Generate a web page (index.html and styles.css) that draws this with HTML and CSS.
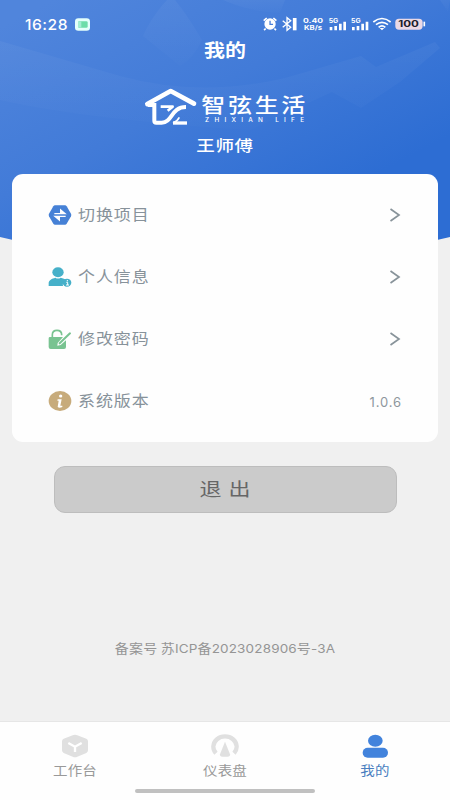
FILE: index.html
```html
<!DOCTYPE html>
<html lang="zh-CN">
<head>
<meta charset="utf-8">
<title>我的</title>
<link rel="stylesheet" href="styles.css">
</head>
<body>
<div class="screen">
  <svg class="backdrop" viewBox="0 0 450 260" aria-hidden="true">
    <defs>
      <linearGradient id="sky" gradientUnits="userSpaceOnUse" x1="90" y1="-20" x2="230" y2="250">
        <stop offset="0" stop-color="#5085dc"/><stop offset=".5" stop-color="#427bd8"/><stop offset="1" stop-color="#2d6dd3"/>
      </linearGradient>
      <linearGradient id="fade" x1="0" y1="0" x2="0" y2="1">
        <stop offset="0" stop-color="#fff" stop-opacity=".04"/><stop offset="1" stop-color="#fff" stop-opacity="0.01"/>
      </linearGradient>
    </defs>
    <path d="M0 0H450V237Q225 292 0 237Z" fill="url(#sky)"/>
    <path d="M167 0C155 13 148 25 143 36L180 66Q194 58 202 40Q188 16 175 0Z" fill="url(#fade)"/>
    <path d="M0 41L120 76Q200 98 285 78L361 56L376 67L435 42L440 48L400 82L361 108L332 92L250 130Q90 120 0 100Z" fill="url(#fade)"/>
    <path d="M450 0H440L448 12ZM223 0H285L280 13Q250 12 223 0Z" fill="url(#fade)"/>
  </svg>

  <header class="status">
    <span class="clock">16:28</span>
    <svg class="chip" viewBox="0 0 45 38"><rect width="45" height="38" rx="10" fill="#e4fffb"/><rect x="9" y="9" width="29" height="20" rx="4" fill="#6cdda9"/><path d="M9 10h10v18h-6q-4 0-4-4z" fill="#a3eed3"/></svg>
    <svg class="indicators" viewBox="110 50 495 50" fill="none" stroke="#fff">
      <circle cx="134" cy="74" r="17" fill="#fff" stroke="none"/>
      <path d="M115 64l9-8M153 64l-9-8M121 88l-5 4M147 88l5 4" stroke-width="5"/>
      <path d="M134 64v11h9" stroke="#4a80da" stroke-width="4"/>
      <path d="M172 64l24 20-11 9V55l11 9-24 20" stroke-width="4"/>
      <path d="M208 56v37" stroke-width="11"/>
      <g fill="#fff" stroke="none" class="signal-text">
        <text x="233" y="71" textLength="60" lengthAdjust="spacingAndGlyphs">0.40</text>
        <text x="236" y="93" textLength="54" lengthAdjust="spacingAndGlyphs">KB/s</text>
        <text x="310" y="70" textLength="29" lengthAdjust="spacingAndGlyphs">5G</text>
        <text x="377" y="70" textLength="29" lengthAdjust="spacingAndGlyphs">5G</text>
      </g>
      <path d="M317 93v-10M331 93v-13M345 93V73M358 93V67M384 93v-10M398 93v-13M412 93V73M425 93V67" stroke-width="8"/>
      <path d="M444 68Q470 47 496 68M452 76Q470 62 488 76M460 84Q470 75 480 84" stroke-width="5"/>
      <path d="M463 86h14l-7 7z" fill="#fff" stroke="none"/>
      <rect x="510" y="58" width="82" height="33" rx="11" fill="#ead9e6" stroke="none"/>
      <path d="M597 67v14" stroke-width="5"/>
      <text x="519" y="83" class="battery" fill="#20202c" stroke="none" textLength="62" lengthAdjust="spacingAndGlyphs">100</text>
    </svg>
  </header>

  <h1 class="title"><span class="squat">我的</span></h1>

  <svg class="logo" viewBox="42 18 486 120" role="img">
    <g fill="none" stroke="#fff" stroke-linejoin="round">
      <path d="M52 72L122 33L192 71" stroke-width="14" stroke-linecap="round"/>
      <path d="M53 75H73V122Q73 128 79 128H95C128 128 122 81 168 81" stroke-width="12" stroke-linejoin="miter"/>
      <path d="M92 80H128L113 92" stroke-width="8"/>
      <path d="M129 129H171" stroke-width="10"/>
      <path d="M129 129Q141 125 148 112" stroke-width="5"/>
    </g>
    <text x="214" y="118" class="brand" textLength="312" lengthAdjust="spacing">智弦生活</text>
    <text x="225" y="127" class="brand-latin" textLength="297" lengthAdjust="spacing">ZHIXIAN LIFE</text>
  </svg>
  <div class="username"><span class="squat">王师傅</span></div>

  <main class="card">
    <div class="row">
      <svg class="icon" viewBox="0 0 72 60"><path d="M21 1H51Q54 1 56 4L69 26Q71 30 69 34L56 56Q54 59 51 59H21Q18 59 16 56L3 34Q1 30 3 26L16 4Q18 1 21 1Z" fill="#4681d6"/><path d="M19 26H51L38 15V25M53 34H21L34 45V35" fill="#fff" stroke="#fff" stroke-width="4"/></svg>
      <span class="label">切换项目</span>
      <svg class="chevron" viewBox="0 0 12 14"><path d="M1.500 1L10 7L1.500 13"/></svg>
    </div>
    <div class="row">
      <svg class="icon" viewBox="0 0 72 60"><ellipse cx="30" cy="16" rx="17" ry="15" fill="#46b0c9"/><path d="M2 57V49C2 39 12 35 22 32Q30 37 38 32C45 34 51 35 53 39Q42 46 45 57Z" fill="#46b0c9"/><ellipse cx="57" cy="47" rx="13" ry="12" fill="#46b0c9"/><path d="M58 39v4M55 46h4v8M54 54h9" stroke="#fff" stroke-width="3" fill="none"/></svg>
      <span class="label">个人信息</span>
      <svg class="chevron" viewBox="0 0 12 14"><path d="M1.500 1L10 7L1.500 13"/></svg>
    </div>
    <div class="row">
      <svg class="icon" viewBox="0 0 72 60"><path d="M13 27V17Q13 4 27 4T41 17V19" fill="none" stroke="#79c391" stroke-width="5"/><path d="M4 24H45L29 42L28 50L38 48L54 34V54Q54 60 48 60H8Q2 60 2 54V28Q2 24 6 24Z" fill="#79c391"/><path d="M35 43L66 13" stroke="#79c391" stroke-width="6" stroke-linecap="round"/></svg>
      <span class="label">修改密码</span>
      <svg class="chevron" viewBox="0 0 12 14"><path d="M1.500 1L10 7L1.500 13"/></svg>
    </div>
    <div class="row">
      <svg class="icon" viewBox="0 0 72 60"><ellipse cx="36" cy="30" rx="34" ry="30" fill="#c7ab7b"/><ellipse cx="38" cy="15" rx="5" ry="4.500" fill="#fff"/><path d="M29 25H41L37 44H43V48Q34 52 29 48L32 29H28Z" fill="#fff"/></svg>
      <span class="label">系统版本</span>
      <span class="version">1.0.6</span>
    </div>
  </main>

  <button class="logout"><span class="squat">退 出</span></button>

  <footer class="record"><span>备案号 苏</span><span class="latin">ICP</span><span>备</span><span class="latin digits">2023028906</span><span>号</span><span class="latin">-3A</span></footer>

  <nav class="tabs">
    <a class="tab">
      <svg class="tab-icon" viewBox="0 0 84 72"><path d="M35 4Q42 0 49 4L76 14Q81 16 81 22V49Q81 54 76 57L49 68Q42 72 35 68L8 57Q3 54 3 49V22Q3 16 8 14Z" fill="#e0e0e0"/><path d="M22 27L42 38L62 27M42 38V54" fill="none" stroke="#fff" stroke-width="7"/></svg>
      <span>工作台</span>
    </a>
    <a class="tab">
      <svg class="tab-icon" viewBox="0 0 84 72"><path d="M15 58A35 31 0 1 1 69 58" fill="none" stroke="#e0e0e0" stroke-width="13"/><path d="M42 23L57 61Q58 68 50 68H34Q26 68 27 61Z" fill="#e0e0e0"/></svg>
      <span>仪表盘</span>
    </a>
    <a class="tab active">
      <svg class="tab-icon" viewBox="0 0 84 72"><ellipse cx="43" cy="20" rx="22" ry="18" fill="#4283dc"/><rect x="5" y="41" width="76" height="30" rx="15" fill="#4283dc"/></svg>
      <span>我的</span>
    </a>
    <i class="home-bar"></i>
  </nav>
</div>
</body>
</html>
```

FILE: styles.css
```css
* { box-sizing: border-box; }
body { margin: 0; font-family: "Noto Sans CJK SC", sans-serif; }
.screen {
  position: relative;
  display: flex;
  flex-direction: column;
  width: 450px;
  height: 800px;
  overflow: hidden;
  background: #f0f0f0;
}
.screen > * { flex-shrink: 0; }
.backdrop { position: absolute; top: 0; left: 0; width: 450px; height: 260px; }
.status, .title, .logo, .username, .card { position: relative; }

.status {
  display: flex;
  align-items: center;
  height: 36px;
  padding: 13px 23px 0 25px;
  color: #fff;
}
.clock {
  width: 50px;
  font: 500 15px/20px Inter, sans-serif;
  letter-spacing: .5px;
  transform: scaleX(1.04);
  transform-origin: left;
}
.chip { width: 15px; height: 13px; }
.indicators { width: 165px; height: 16.667px; margin-left: auto; }
.signal-text { font: 700 19px Inter, sans-serif; }
.battery { font: 700 25px Inter, sans-serif; }

.squat { display: inline-block; transform: translateY(-1px) scaleY(.88); }
.title {
  margin: 0;
  height: 30px;
  color: #fff;
  font-size: 21px;
  line-height: 30px;
  font-weight: 700;
  text-align: center;
}
.title .squat { transform: translateY(-1.500px) scaleY(.85); }
.logo { display: block; width: 162px; height: 40px; margin: 20px 0 0 144px; }
.brand { font-size: 72px; font-weight: 500; fill: #fff; transform: scaleY(.83); }
.brand-latin { font: 500 19px Inter, sans-serif; fill: #fff; }
.username {
  height: 24px;
  margin-top: 8px;
  color: #fff;
  font-size: 18.500px;
  line-height: 24px;
  font-weight: 500;
  letter-spacing: .6px;
  text-align: center;
}
.username .squat { transform: translateY(-2px) scaleY(.82); }

.card {
  width: 426px;
  height: 268px;
  margin: 16px 12px 0;
  padding: 10px 36px;
  border-radius: 11px;
  background: #fefefe;
}
.row { display: flex; align-items: center; height: 62px; }
.icon { width: 24px; height: 20px; }
.label {
  margin-left: 6px;
  color: #87929a;
  font-size: 17px;
  line-height: 24px;
  letter-spacing: .9px;
  transform: translateY(-1px) scaleY(.89);
}
.chevron { width: 12px; height: 14px; margin: 0 1.500px 0 auto; fill: none; stroke: #88939a; stroke-width: 1.700; }
.version {
  margin-left: auto;
  color: #8e979d;
  font: 400 13px/20px Inter, sans-serif;
  letter-spacing: .9px;
  transform: translateY(1px);
}

.logout {
  width: 343px;
  height: 47px;
  margin: 24px 0 0 54px;
  padding: 0;
  border: 1px solid #bdbdbd;
  border-radius: 11px;
  background: #cbcbcb;
  color: #666;
  font: 400 22px/45px "Noto Sans CJK SC", sans-serif;
  letter-spacing: 1px;
}
.logout .squat { transform: translateY(-1px) scaleY(.84); }
.record {
  display: flex;
  justify-content: center;
  margin-top: 125px;
  color: #959595;
  font-size: 14px;
  line-height: 20px;
  letter-spacing: .2px;
  white-space: pre;
  transform: translateY(-.5px) scaleY(.9);
}
.record .latin { font-family: Inter, sans-serif; font-size: 13.500px; letter-spacing: .15px; transform: translateY(1px); }

.tabs {
  position: relative;
  display: grid;
  grid-template-columns: repeat(3, 1fr);
  height: 79px;
  margin-top: auto;
  border-top: 1px solid #e6e6e6;
  background: #fefefe;
}
.tab {
  display: flex;
  flex-direction: column;
  align-items: center;
  padding-top: 12px;
  color: #999;
  font-size: 14.500px;
  line-height: 20px;
  letter-spacing: .2px;
}
.tab span { margin-top: 2px; transform: scaleY(.88); }
.tab.active { color: #4a7ec0; }
.tab-icon { width: 28px; height: 24px; }
.home-bar {
  position: absolute;
  left: 135px;
  bottom: 7px;
  width: 180px;
  height: 4px;
  border-radius: 2px;
  background: #c0c0c0;
}
```
